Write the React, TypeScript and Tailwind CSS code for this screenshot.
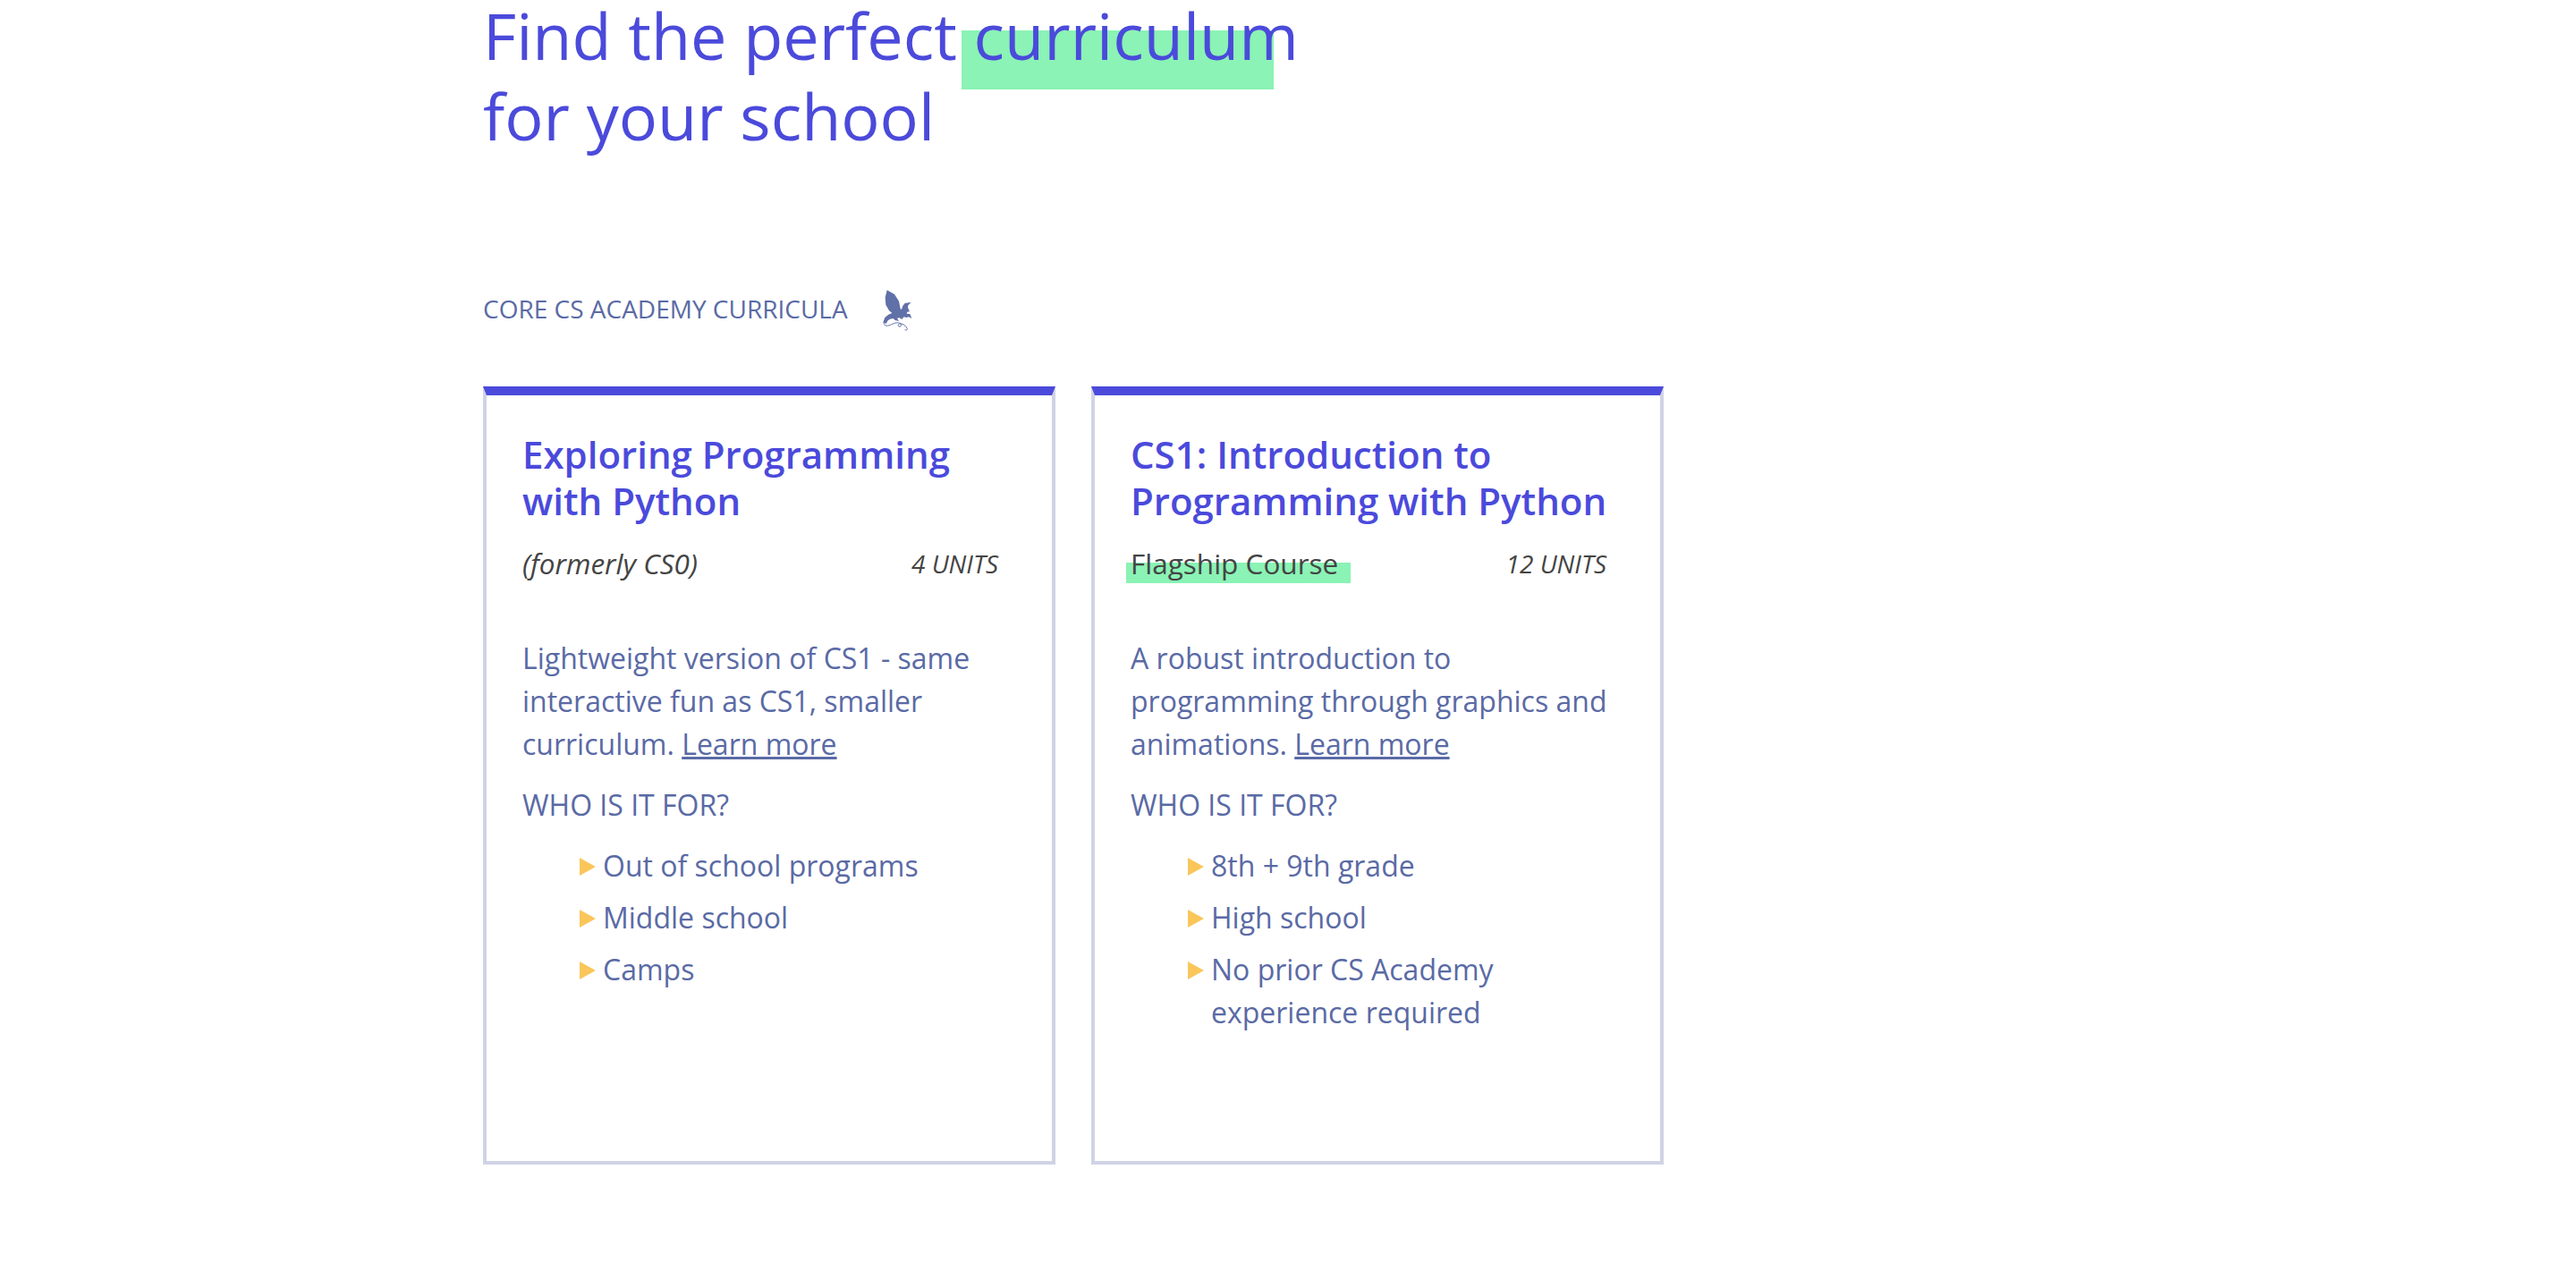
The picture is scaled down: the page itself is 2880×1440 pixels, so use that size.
const font = { fontFamily: '"Open Sans", "Noto Sans", sans-serif' };

const Dragon = () => (
  <svg viewBox="0 0 135 156" className="w-[45px] h-[52px]" fill="#6070a8">
    <path d="M35 13 L60 27 L75 50 L80 76 L84 78 L88 66 L95 57 L116 54 L106 64 L105 72 L111 85 L103 86 L101 92 L112 93 L118 108 L108 103 L100 105 L92 103 L85 111 L76 106 L69 107 L75 117 L62 114 L56 108 L45 110 L38 115 L32 126 L22 121 L28 105 L40 95 L52 90 L42 82 L31 62 L29 38 Z" />
    <path
      d="M25 120 C23 133 34 135 46 130 C56 125 68 120 78 124 C86 128 82 138 75 135 C69 131 74 123 84 126 C94 129 100 136 103 143 C102 149 97 149 95 145"
      fill="none"
      stroke="#6070a8"
      strokeWidth="3"
    />
  </svg>
);

const Card = ({
  title,
  sub,
  subItalic,
  units,
  desc,
  items,
  flagship,
}: {
  title: string[];
  sub: string;
  subItalic?: boolean;
  units: string;
  desc: string;
  items: string[][];
  flagship?: boolean;
}) => (
  <div className="relative w-[640px] h-[870px] border-x-4 border-b-4 border-t-[10px] border-x-[#d0d3e6] border-b-[#d0d3e6] border-t-[#4b4adb] pt-[40px] pl-[40px] pr-[40px]">
    <div className="text-[42px] leading-[52px] font-semibold text-[#4b4adb]">
      {title.map((t) => (
        <div key={t}>{t}</div>
      ))}
    </div>
    <div className="relative flex justify-between items-center mt-[20px] mr-[20px] h-[48px] text-[#444444]">
      {flagship && (
        <div className="absolute left-[-5px] top-[23px] w-[251px] h-[23px] bg-[#8af3b5]" />
      )}
      <span className={subItalic ? "relative text-[31.5px] italic" : "relative text-[31.5px]"}>{sub}</span>
      <span className="relative text-[28px] italic">{units}</span>
    </div>
    <p className="mt-[58px] text-[32px] leading-[48px] text-[#5a6aa5]">
      {desc} <span className="underline">Learn more</span>
    </p>
    <div className="mt-[20px] text-[32px] leading-[48px] text-[#5a6aa5]">WHO IS IT FOR?</div>
    <ul className="mt-[20px] pl-[64px] text-[32px] leading-[48px] text-[#5a6aa5] flex flex-col gap-[10px]">
      {items.map((lines) => (
        <li key={lines[0]} className="flex gap-[8px]">
          <span className="mt-[15px] h-0 w-0 shrink-0 border-y-[10px] border-l-[18px] border-y-transparent border-l-[#fac65a]" />
          <span>
            {lines.map((l) => (
              <div key={l}>{l}</div>
            ))}
          </span>
        </li>
      ))}
    </ul>
  </div>
);

export default function App() {
  return (
    <div className="relative h-[1440px] w-[2880px] overflow-hidden bg-white pl-[540px]" style={font}>
      <div className="absolute left-[1075px] top-[34px] w-[349px] h-[66px] bg-[#8af3b5]" />
      <h1 className="relative text-[72px] leading-[90px] font-normal text-[#4b4adb] -mt-[6px]">
        <div>Find the perfect curriculum</div>
        <div>for your school</div>
      </h1>
      <div className="flex items-center mt-[141px] h-[60px] text-[28px] text-[#5a6aa5]">
        <span>CORE CS ACADEMY CURRICULA</span>
        <span className="ml-[32px] mt-[2px]">
          <Dragon />
        </span>
      </div>
      <div className="flex gap-[40px] mt-[57px]">
        <Card
          title={["Exploring Programming", "with Python"]}
          sub="(formerly CS0)"
          subItalic
          units="4 UNITS"
          desc="Lightweight version of CS1 - same interactive fun as CS1, smaller curriculum."
          items={[["Out of school programs"], ["Middle school"], ["Camps"]]}
        />
        <Card
          title={["CS1: Introduction to", "Programming with Python"]}
          sub="Flagship Course"
          units="12 UNITS"
          desc="A robust introduction to programming through graphics and animations."
          items={[["8th + 9th grade"], ["High school"], ["No prior CS Academy", "experience required"]]}
          flagship
        />
      </div>
    </div>
  );
}
